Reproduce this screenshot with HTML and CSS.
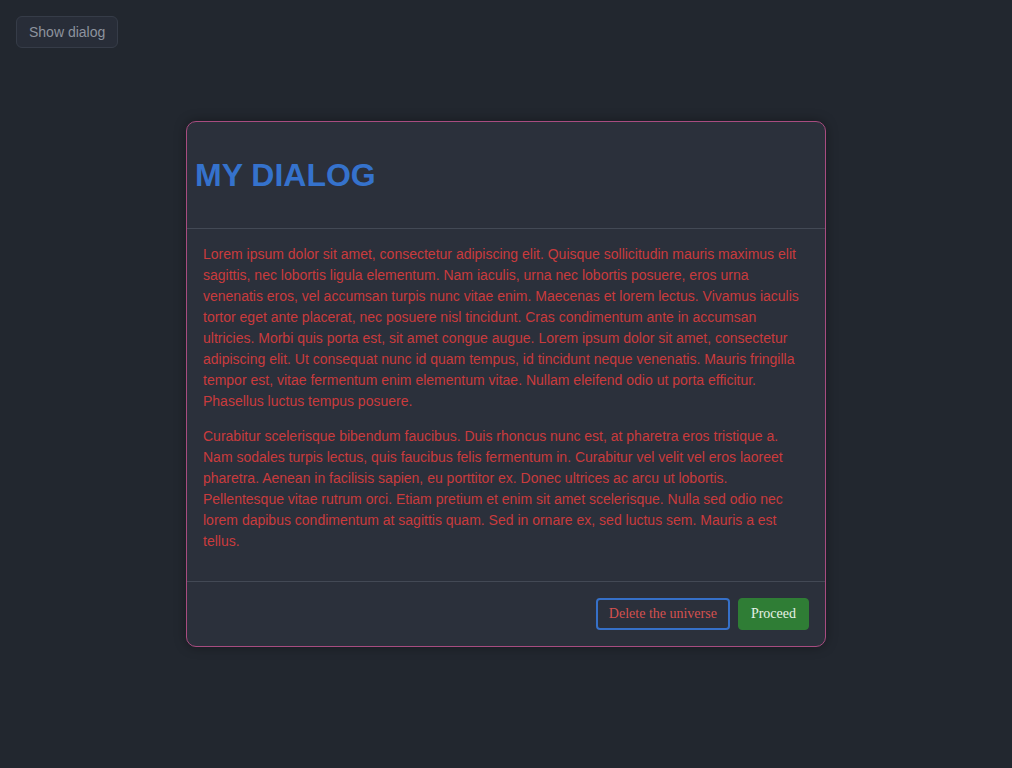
FILE: index.html
```html
<!DOCTYPE html>
<html lang="en">
<head>
<meta charset="utf-8">
<title>Dialog</title>
<link rel="stylesheet" href="styles.css">
</head>
<body>
<button class="show-btn">Show dialog</button>
<div class="overlay">
  <div class="dialog">
    <header class="dialog-header">
      <h2 class="dialog-title">MY DIALOG</h2>
    </header>
    <div class="dialog-body">
      <p>Lorem ipsum dolor sit amet, consectetur adipiscing elit. Quisque sollicitudin mauris maximus elit sagittis, nec lobortis ligula elementum. Nam iaculis, urna nec lobortis posuere, eros urna venenatis eros, vel accumsan turpis nunc vitae enim. Maecenas et lorem lectus. Vivamus iaculis tortor eget ante placerat, nec posuere nisl tincidunt. Cras condimentum ante in accumsan ultricies. Morbi quis porta est, sit amet congue augue. Lorem ipsum dolor sit amet, consectetur adipiscing elit. Ut consequat nunc id quam tempus, id tincidunt neque venenatis. Mauris fringilla tempor est, vitae fermentum enim elementum vitae. Nullam eleifend odio ut porta efficitur. Phasellus luctus tempus posuere.</p>
      <p>Curabitur scelerisque bibendum faucibus. Duis rhoncus nunc est, at pharetra eros tristique a. Nam sodales turpis lectus, quis faucibus felis fermentum in. Curabitur vel velit vel eros laoreet pharetra. Aenean in facilisis sapien, eu porttitor ex. Donec ultrices ac arcu ut lobortis. Pellentesque vitae rutrum orci. Etiam pretium et enim sit amet scelerisque. Nulla sed odio nec lorem dapibus condimentum at sagittis quam. Sed in ornare ex, sed luctus sem. Mauris a est tellus.</p>
    </div>
    <footer class="dialog-footer">
      <button class="btn btn-danger">Delete the universe</button>
      <button class="btn btn-primary">Proceed</button>
    </footer>
  </div>
</div>
</body>
</html>
```
FILE: styles.css
```css
html, body {
  margin: 0;
  height: 100%;
}
body {
  background: #22272f;
  font-family: "Liberation Sans", Arial, sans-serif;
  padding: 16px;
  box-sizing: border-box;
}
.show-btn {
  display: block;
  height: 32px;
  padding: 0 12px;
  background: #282d38;
  border: 1px solid #363c48;
  border-radius: 6px;
  color: #8d939e;
  font-family: "Liberation Sans", Arial, sans-serif;
  font-size: 14px;
}
.overlay {
  display: flex;
  justify-content: center;
  padding-top: 73px;
}
.dialog {
  width: 640px;
  box-sizing: border-box;
  background: #2b303b;
  border: 1px solid #a84c80;
  border-radius: 10px;
  box-shadow: 0 0 12px rgba(0, 0, 0, 0.35);
}
.dialog-header {
  height: 106px;
  display: flex;
  align-items: center;
  padding: 0 8px;
  border-bottom: 1px solid #434955;
}
.dialog-title {
  margin: 0;
  font-size: 32px;
  font-weight: bold;
  color: #3572cc;
  font-family: "Liberation Sans", Arial, sans-serif;
}
.dialog-body {
  padding: 15px 16px 15px;
  color: #c93b3d;
  font-size: 14px;
  line-height: 21px;
  border-bottom: 1px solid #434955;
}
.dialog-body p {
  margin: 0 0 14px;
}
.dialog-footer {
  display: flex;
  justify-content: flex-end;
  gap: 8px;
  padding: 16px;
}
.btn {
  height: 32px;
  padding: 0 11px;
  border-radius: 4px;
  font-family: "Liberation Serif", "Times New Roman", serif;
  font-size: 14px;
}
.btn-danger {
  background: transparent;
  border: 2px solid #3670c8;
  color: #d4504f;
}
.btn-primary {
  background: #2f7d35;
  border: 1px solid #2f7d35;
  color: #e6f2e6;
  padding: 0 12px;
}
```
